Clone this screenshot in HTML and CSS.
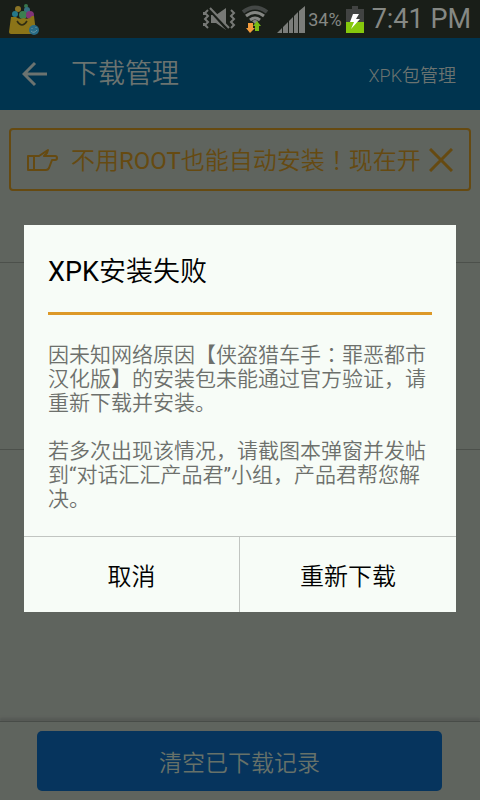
FILE: index.html
```html
<!DOCTYPE html>
<html lang="zh-CN">
<head>
<meta charset="utf-8">
<meta name="viewport" content="width=device-width, initial-scale=1">
<title>下载管理</title>
<link rel="stylesheet" href="styles.css">
</head>
<body>
<div class="statusbar">
  <svg class="app-icon" width="32" height="32" viewBox="0 0 32 32" aria-hidden="true">
    <circle cx="10" cy="6" r="3" fill="#8a7426"/><circle cx="18" cy="3" r="2" fill="#38764d"/>
    <circle cx="19" cy="7" r="3" fill="#367080"/><circle cx="7" cy="11" r="3" fill="#267889"/>
    <circle cx="15" cy="12" r="4" fill="#3c8050"/><circle cx="22" cy="12" r="4" fill="#803577"/>
    <path d="M3 14H8Q11 17 16 15Q21 17 24 13H26L28 29Q28 31 26 31H3Q1 31 1 29Z" fill="#8b7418"/>
    <path d="M9 18Q14 26 19 18" fill="none" stroke="#302d12" stroke-width="1.5"/>
    <circle cx="26" cy="27" r="5" fill="#286b86"/>
    <path d="M23 28Q26 31 29 27M24 25V26M28 24V25" fill="none" stroke="#6e969f"/>
  </svg>
  <div class="indicators">
    <svg width="33" height="24" viewBox="0 0 33 24" aria-hidden="true">
      <path d="M8 8H13L23 1V23L13 16H8Z" fill="#777976"/>
      <path d="M7 3L25 23" stroke="#191e18" stroke-width="3"/>
      <path d="M7 1L26 21" stroke="#777976" stroke-width="2"/>
      <path d="M5 3L2 6L5 9L2 12L5 15L2 18L5 21M1 5V8M1 16V19M28 3L31 6L28 9L31 12L28 15L31 18L28 21" fill="none" stroke="#777976" stroke-width="2"/>
    </svg>
    <svg class="wifi" width="28" height="28" viewBox="0 0 28 28" aria-hidden="true">
      <path d="M2 7Q14-2 26 7" fill="none" stroke="#444846" stroke-width="4"/>
      <path d="M5 11Q14 4 23 11M9 15Q14 11 19 15" fill="none" stroke="#858783" stroke-width="3"/>
      <path d="M11 16Q14 14 17 16L14 19Z" fill="#858783"/>
      <path d="M7 18H12V23H14L9 28L5 23H7Z" fill="#f29b3d"/>
      <path d="M14 26H18V21H20L16 16L12 21H14Z" fill="#79bb15"/>
    </svg>
    <svg class="signal" width="28" height="27" viewBox="0 0 28 27" aria-hidden="true">
      <path d="M0 27L5 22V27ZM6 27V21L11 16V27ZM12 27V15L16 11V27ZM17 27V10L21 6V27ZM22 27V5L28 0V27Z" fill="#7b7d7a"/>
    </svg>
    <span class="percent">34%</span>
    <svg class="battery" width="18" height="27" viewBox="0 0 18 27" aria-hidden="true">
      <path d="M0 3H6V0H12V3H18V27H0Z" fill="#414342"/><path d="M0 16H18V27H0Z" fill="#86c80c"/>
      <path d="M7 8H13L10 13H14L5 23L8 16H4Z" fill="#fff"/>
    </svg>
    <span class="clock">7:41 PM</span>
  </div>
</div>
<div class="screen">
  <header class="topbar">
    <button class="icon-button back" aria-label="返回">
      <svg width="25" height="26" viewBox="0 0 25 26" fill="none" stroke="currentColor" stroke-width="3"><path d="M13 2L2 13L13 24M2 13H25"/></svg>
    </button>
    <h1 class="page-title">下载管理</h1>
    <a class="manage-link" href="#packages">XPK包管理</a>
  </header>
  <main class="content">
    <div class="notice">
      <svg class="hand" width="32" height="24" viewBox="0 0 32 24" fill="none" stroke="currentColor" stroke-width="2" stroke-linejoin="round" aria-hidden="true"><path d="M1 8H7V22H1ZM7 8H12L21 2L20 5L17 8H28Q30 8 30 10Q30 12 28 12H25L22 20Q21 22 19 22H7"/></svg>
      <p class="notice-text">不用<span class="latin">ROOT</span>也能自动安装<span class="centered" lang="zh-TW">！</span>现在开</p>
      <button class="icon-button close" aria-label="关闭">
        <svg width="24" height="24" viewBox="0 0 24 24" fill="none" stroke="currentColor" stroke-width="3"><path d="M1 1L23 23M23 1L1 23"/></svg>
      </button>
    </div>
    <div class="list"></div>
  </main>
  <footer class="footer"><button class="clear">清空已下载记录</button></footer>
  <div class="overlay">
    <section class="dialog" role="dialog" aria-modal="true" aria-labelledby="dialog-title">
      <div class="dialog-main">
        <h2 class="dialog-title" id="dialog-title"><span class="latin">XPK</span>安装失败</h2>
        <div class="message">
          <p>因未知网络原因【侠盗猎车手<span class="centered" lang="zh-TW">：</span>罪恶都市汉化版】的安装包未能通过官方验证，请重新下载并安装。</p>
          <p>若多次出现该情况，请截图本弹窗并发帖到<span class="latin">“</span>对话汇汇产品君<span class="latin">”</span>小组，产品君帮您解决。</p>
        </div>
      </div>
      <div class="actions"><button>取消</button><button>重新下载</button></div>
    </section>
  </div>
</div>
</body>
</html>
```
FILE: styles.css
```css
* { box-sizing: border-box; }
body {
  display: flex;
  flex-direction: column;
  min-height: 100vh;
  margin: 0;
  background: #5f645e;
  font-family: Roboto, "Noto Sans CJK SC", sans-serif;
  font-weight: 350;
}
h1, h2, p { margin: 0; font-weight: inherit; }
button { border: 0; padding: 0; background: none; color: inherit; font: inherit; }
svg { display: block; flex: none; }
.latin { font-weight: 400; }
.statusbar {
  display: flex;
  align-items: center;
  justify-content: space-between;
  height: 38px;
  padding: 0 9px 0 8px;
  background: #191e18;
  color: #858884;
  font-weight: 400;
}
.indicators { display: flex; align-items: center; }
.wifi { margin-left: 5px; }
.signal { margin-left: 8px; }
.percent { margin-left: 3px; font-size: 18px; }
.battery { margin: 0 8px 0 4px; }
.clock { font-size: 27px; line-height: 36px; }
.screen { position: relative; display: flex; flex: 1; flex-direction: column; }
.topbar {
  display: flex;
  align-items: center;
  height: 72px;
  padding: 0 24px 0 22px;
  background: #00344f;
  color: #6b7370;
}
.page-title { flex: 1; margin-left: 24px; font-size: 27px; line-height: 38px; }
.manage-link { color: inherit; font-size: 18px; text-decoration: none; }
.content { display: flex; flex: 1; flex-direction: column; }
.notice {
  display: flex;
  align-items: center;
  height: 63px;
  margin: 18px 9px 71px;
  padding: 0 16px;
  border: 2px solid #664a11;
  border-radius: 4px;
  color: #664a11;
}
.notice-text {
  flex: 1;
  min-width: 0;
  margin: 0 4px 0 12px;
  font-size: 24px;
  line-height: 36px;
  white-space: nowrap;
}
.centered { font-family: "Noto Sans CJK TC", sans-serif; }
.list { height: 188px; border: solid #4c504b; border-width: 1px 0; }
.footer {
  padding: 9px 38px 9px 37px;
  border-top: 1px solid #484c48;
  box-shadow: 0 -3px 2px #565955;
}
.clear {
  width: 100%;
  height: 60px;
  border-radius: 5px;
  background: #06345d;
  color: #667169;
  font-size: 23px;
}
.overlay {
  position: absolute;
  inset: 0;
  display: flex;
  align-items: center;
  padding: 0 24px 2px;
}
.dialog { width: 100%; background: #f7fcf7; }
.dialog-main { padding: 28px 24px 25px; }
.dialog-title {
  padding-bottom: 21px;
  border-bottom: 3px solid #dd9928;
  color: #000;
  font-size: 27px;
  line-height: 38px;
}
.message {
  display: grid;
  gap: 24px;
  padding-top: 26px;
  color: #6d706c;
  font-size: 21px;
  line-height: 24px;
}
.actions {
  display: grid;
  grid-template-columns: 1fr 1fr;
  border-top: 1px solid #c1c5c1;
  color: #000;
  font-size: 24px;
}
.actions button { height: 75px; }
.actions button:first-child { border-right: 1px solid #c1c5c1; }
```
